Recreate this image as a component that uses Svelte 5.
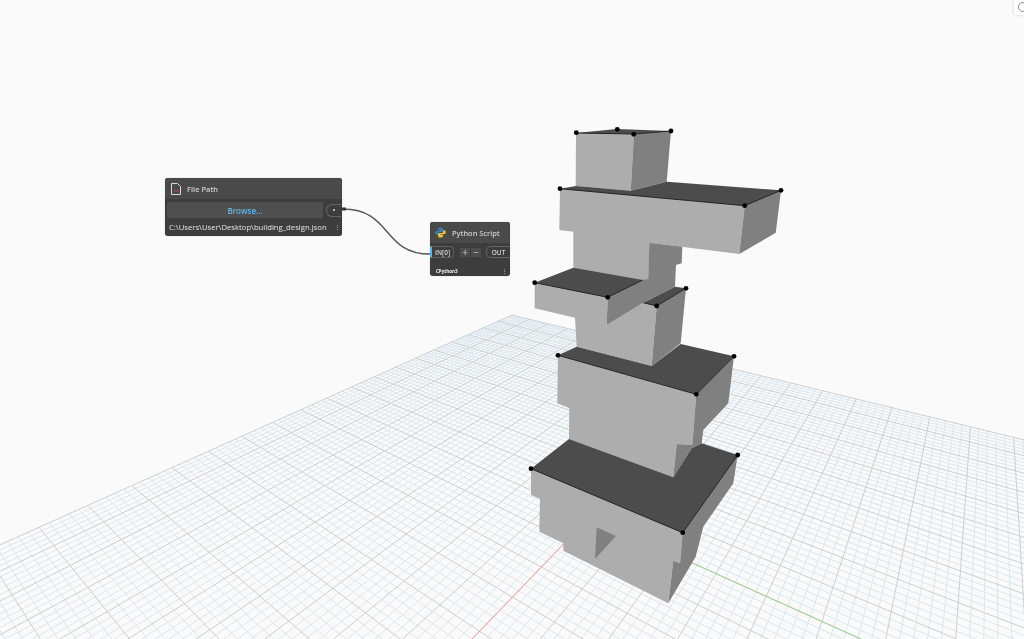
<script>
	// ground plane homography: s runs along the red axis, t along the green axis
	const v1 = [993, 99];
	const v2 = [-292, 119];
	const origin = [598, 514];
	const w1 = 0.534;
	const w2 = 0.4266;

	function project(s, t) {
		const d = s * w1 + t * w2 + 1;
		const x = (s * w1 * v1[0] + t * w2 * v2[0] + origin[0]) / d;
		const y = (s * w1 * v1[1] + t * w2 * v2[1] + origin[1]) / d;
		return x.toFixed(1) + ' ' + y.toFixed(1);
	}

	function seg(s0, t0, s1, t1) {
		return 'M' + project(s0, t0) + 'L' + project(s1, t1);
	}

	// grid index (in major cells, -10..10) to plane coordinates, fitted to the picture
	const gridS = (k) => -0.02 + (k > 0 ? 0.102 : 0.1) * k;
	const gridT = (k) => 0.01 + (k > 0 ? 0.099 : 0.097) * k;

	let minorPath = '';
	let majorPath = '';
	for (let i = -50; i <= 50; i++) {
		const k = i / 5;
		const line =
			seg(gridS(k), gridT(-10), gridS(k), gridT(10)) +
			seg(gridS(-10), gridT(k), gridS(10), gridT(k));
		if (i % 5 === 0) majorPath += line;
		else minorPath += line;
	}
	const redAxis = seg(gridS(-10), gridT(0), gridS(0), gridT(0));
	const greenAxis = seg(gridS(0), gridT(-10), gridS(0), gridT(0));

	const lightFaces = [
		'576,133 634,134 630.7,190.7 575.7,186',
		'560,188.7 744.7,205.7 739.3,254 649.3,242.7 648.3,300 573.3,300 573.3,231.7 559.3,230',
		'534.7,282.7 607.7,297.3 606.7,325 643.3,302.7 656.7,306 651.7,366 576.7,346.7 575,317.7 534.7,308.3',
		'558,355.3 696.3,394.3 692.3,445 676.7,444 673.3,477.3 569,439 569.3,408 557.3,403.3',
		'531,468.7 682.7,532.7 680,563.3 673.3,560.7 668.3,603.3 563.3,550.7 563.3,543.3 539.3,531.7 540,499 531,495'
	];
	const sideFaces = [
		'634,134 671,131 666.7,181.7 630.7,190.7',
		'744.7,205.7 781,190.3 775.7,232.7 739.3,254',
		'607.7,297.3 642.7,280 648.3,279 649.3,242.7 682.3,246.7 681.7,263.3 676,265 675,286.7 643.3,302.7 606.7,325',
		'656.7,306 686,288.3 680.7,343.3 651.7,366',
		'696.3,394.3 734,356.3 728.3,403.3 703.3,430 701.7,443.3 691.7,448.3 673.3,477.3 676.7,444 692.3,445',
		'682.7,532.7 737.7,455 733.3,483.3 703.3,526.7 695.7,556.7 668.3,603.3 673.3,560.7 680,563.3',
		'596.7,527.3 616,536 595,559'
	];
	const topFaces = [
		'576,133 617,129 671,131 634,134',
		'560,188.7 576,186 630.7,190.7 666.7,181.7 781,190.3 744.7,205.7',
		'534.7,282.7 573.3,267.7 642.7,280 607.7,297.3',
		'643.3,302.7 675,286.7 686,288.3 656.7,306',
		'558,355.3 576.7,346.7 651.7,366 680.7,344 734,356.3 696.3,394.3',
		'531,468.7 569,439 673.3,477.3 691.7,448.3 701.7,443.3 737.7,455 682.7,532.7'
	];
	const edges = [
		'576,133 634,134 671,131',
		'560,188.7 744.7,205.7 781,190.3',
		'534.7,282.7 607.7,297.3 642.7,280',
		'643.3,302.7 656.7,306 686,288.3',
		'558,355.3 696.3,394.3 734,356.3',
		'531,468.7 682.7,532.7 737.7,455'
	];
	const points = [
		[576.3, 132.7], [617.3, 129.3], [671, 131], [633.7, 134.3],
		[560, 188.7], [781, 190.3], [744.7, 205.7],
		[534.7, 282.7], [607.7, 297.3], [656.7, 306], [686, 288.3],
		[558, 355.3], [734, 356.3], [696.3, 394.3],
		[531, 468.7], [737.7, 455], [682.7, 532.7]
	];
</script>

<main class="canvas">
	<svg class="scene" width="1024" height="639" viewBox="0 0 1024 639">
		<defs>
			<clipPath id="floor-clip"><rect width="1024" height="639" /></clipPath>
		</defs>
		<g clip-path="url(#floor-clip)" fill="none">
			<path d={minorPath} stroke="#dbe6ee" stroke-width="1" />
			<path d={majorPath} stroke="#c9cfd1" stroke-width="1" />
			<path d={redAxis} stroke="#f29a9a" stroke-width="1" />
			<path d={greenAxis} stroke="#9cd08f" stroke-width="1" />
		</g>
		{#each lightFaces as p}<polygon points={p} fill="#adadad" />{/each}
		{#each sideFaces as p}<polygon points={p} fill="#808080" />{/each}
		{#each topFaces as p}<polygon points={p} fill="#4c4c4c" />{/each}
		{#each edges as p}<polyline points={p} fill="none" stroke="#222" stroke-width="1" />{/each}
		{#each points as [x, y]}<circle cx={x} cy={y} r="2.4" fill="#000" />{/each}
		<path d="M343 209C392 209 382 254 430 254" fill="none" stroke="#5a5a5a" stroke-width="1.5" />
		<rect x="342" y="207.500" width="4" height="3" fill="#333" />
	</svg>

	<section class="node file-node">
		<header class="node-head">
			<svg class="file-icon" width="10" height="12" viewBox="0 0 10 12">
				<path d="M.5.5H6.500L9.500 3.500V11.500H.5Z" fill="none" stroke="#d8d8d8" stroke-width="1" />
				<path d="M2.500 8H7.500" stroke="#b3544a" stroke-width="1" />
			</svg>
			<span class="node-title">File Path</span>
		</header>
		<div class="file-row">
			<button class="browse">Browse...</button>
			<span class="out-port"><i></i></span>
		</div>
		<div class="path-row">
			<span class="path-text">C:\Users\User\Desktop\building_design.json</span>
			<span class="menu-dots"><i></i><i></i><i></i></span>
		</div>
	</section>

	<section class="node python-node">
		<header class="node-head">
			<svg width="11" height="11" viewBox="0 0 12 12">
				<path d="M6 .5C3.800.5 3.400 1.300 3.400 2.300V3.500H6.200V4H2.200C1 4 .3 4.900.3 6.200S1 8.400 2.100 8.400H3.100V7.100C3.100 6 4 5.400 5 5.400H7.400C8.200 5.400 8.700 4.800 8.700 4V2.300C8.700 1.300 7.900.5 6 .5Z" fill="#3f7fb8" />
				<path d="M6 11.500C8.200 11.500 8.600 10.700 8.600 9.700V8.500H5.800V8H9.800C11 8 11.700 7.100 11.700 5.800S11 3.600 9.900 3.600H8.900V4.900C8.900 6 8 6.600 7 6.600H4.600C3.800 6.600 3.300 7.200 3.300 8V9.700C3.300 10.700 4.100 11.500 6 11.500Z" fill="#e8c14a" />
			</svg>
			<span class="node-title">Python Script</span>
		</header>
		<div class="python-row">
			<span class="in-port">IN[0]</span>
			<span class="stepper"><b>+</b><b>−</b></span>
			<span class="out-pill">OUT</span>
		</div>
		<div class="python-foot">
			<span class="engine">CPython3</span>
			<span class="menu-dots"><i></i><i></i><i></i></span>
		</div>
	</section>

	<aside class="corner-tab">
		<span class="corner-ring"></span>
	</aside>
</main>

<style>
	:global(body) {
		margin: 0;
		background: #fafafa;
	}

	.canvas {
		position: relative;
		width: 1024px;
		height: 639px;
		overflow: hidden;
		background: #fafafa;
		font-family: 'Open Sans', 'Liberation Sans', sans-serif;
	}

	.scene {
		position: absolute;
		inset: 0;
		filter: blur(0.4px);
	}

	.node {
		position: absolute;
		display: flex;
		flex-direction: column;
		background: #3d3d3d;
		border-radius: 3px;
		color: #e8e8e8;
		box-shadow: 0 0 1px rgba(0, 0, 0, 0.4);
		filter: blur(0.3px);
	}

	.file-node {
		left: 165px;
		top: 178px;
		width: 177px;
		height: 58px;
	}

	.python-node {
		left: 430px;
		top: 222px;
		width: 80px;
		height: 54px;
	}

	.node-head {
		display: flex;
		align-items: center;
		background: #4a4a4a;
		border-radius: 3px 3px 0 0;
		flex: none;
	}

	.file-node .node-head {
		height: 21px;
		gap: 6px;
		padding-left: 6px;
	}

	.python-node .node-head {
		height: 21px;
		gap: 6px;
		padding-left: 5px;
	}

	.node-title {
		font-size: 7.5px;
		font-weight: 600;
		color: #cfcfcf;
		white-space: nowrap;
	}

	.python-node .node-title {
		font-size: 7.4px;
	}

	.file-row {
		display: flex;
		align-items: center;
		gap: 3px;
		padding: 3px 0 0 2px;
	}

	.browse {
		width: 156px;
		height: 16px;
		border: none;
		border-radius: 1px;
		padding: 0;
		background: #4f4f4f;
		color: #62b4e4;
		font: 600 8px 'Open Sans', sans-serif;
	}

	.out-port {
		display: flex;
		align-items: center;
		justify-content: center;
		width: 15px;
		height: 13px;
		border: 1px solid #666;
		border-right: none;
		border-radius: 6px 0 0 6px;
		box-sizing: border-box;
	}

	.out-port i {
		width: 2px;
		height: 2px;
		background: #ddd;
		border-radius: 50%;
	}

	.path-row {
		display: flex;
		align-items: center;
		justify-content: space-between;
		padding: 4px 4px 0 4px;
	}

	.path-text {
		font-size: 7.7px;
		line-height: 11px;
		color: #e6e6e6;
		white-space: nowrap;
	}

	.menu-dots {
		display: flex;
		flex-direction: column;
		gap: 1px;
	}

	.menu-dots i {
		width: 1px;
		height: 1px;
		background: #9a9a9a;
	}

	.python-row {
		display: flex;
		align-items: center;
		margin-top: 3px;
		height: 12px;
	}

	.in-port {
		display: flex;
		align-items: center;
		justify-content: center;
		width: 24px;
		height: 12px;
		box-sizing: border-box;
		border: 1px solid #5e5e5e;
		border-left: 2px solid #5bb6e8;
		border-radius: 0 4px 4px 0;
		font-size: 6.500px;
		font-weight: 600;
		color: #d5d5d5;
	}

	.stepper {
		display: flex;
		gap: 1px;
		margin-left: 6px;
	}

	.stepper b {
		display: flex;
		align-items: center;
		justify-content: center;
		width: 10px;
		height: 9px;
		background: #4c4c4c;
		font-size: 10px;
		font-weight: 400;
		color: #c8c8c8;
	}

	.out-pill {
		display: flex;
		align-items: center;
		justify-content: center;
		width: 24px;
		height: 12px;
		margin-left: auto;
		box-sizing: border-box;
		border: 1px solid #666;
		border-right: none;
		border-radius: 5px 0 0 5px;
		font-size: 6.500px;
		font-weight: 600;
		color: #d5d5d5;
	}

	.python-foot {
		display: flex;
		align-items: center;
		justify-content: space-between;
		margin-top: auto;
		padding: 0 5px 2px 6px;
	}

	.engine {
		font-size: 4.500px;
		font-weight: 700;
		color: #f4f4f4;
	}

	.corner-tab {
		position: absolute;
		top: 0;
		right: 0;
		width: 10px;
		height: 15px;
		background: #fff;
		box-shadow: 0 0 3px rgba(0, 0, 0, 0.18);
		overflow: hidden;
	}

	.corner-ring {
		position: absolute;
		left: 4px;
		top: 2px;
		width: 10px;
		height: 10px;
		border: 1px solid #8a8a8a;
		border-radius: 50%;
		box-sizing: border-box;
	}
</style>
